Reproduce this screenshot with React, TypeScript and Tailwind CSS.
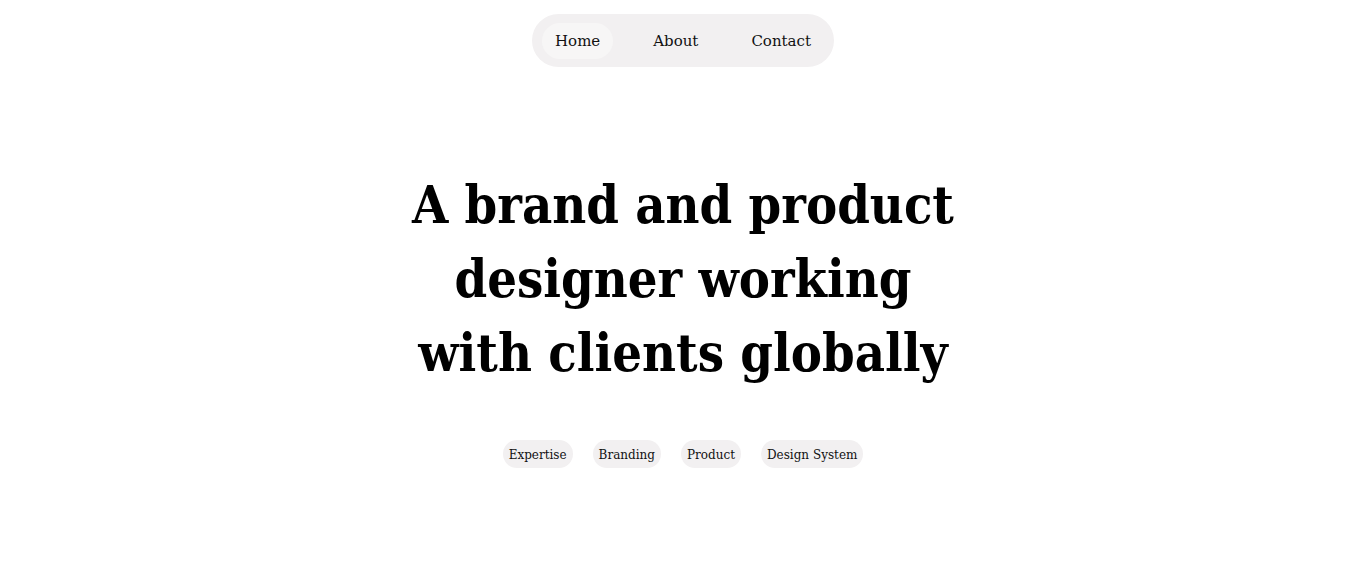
export default function App() {
  const font = { fontFamily: '"Roboto Slab", "DejaVu Serif", serif' };
  const hfont = { fontFamily: '"Roboto Slab", "DejaVu Serif Condensed", "DejaVu Serif", serif', fontStretch: "condensed" as const };
  return (
    <div className="min-h-[576px] w-full bg-white text-black" style={font}>
      <div className="flex justify-center pt-[14px]">
        <nav className="flex items-center gap-[27px] rounded-full bg-[#f2f0f1] px-[10px] h-[53px]">
          <a className="flex h-[36px] items-center rounded-full bg-[#f7f6f6] px-[13px] pt-[2px] text-[15px] text-[#111]">Home</a>
          <a className="flex h-[36px] items-center rounded-full px-[13px] pt-[2px] text-[15px] text-[#111]">About</a>
          <a className="flex h-[36px] items-center rounded-full px-[13px] pt-[2px] text-[15px] text-[#111]">Contact</a>
        </nav>
      </div>
      <h1 className="mx-auto mt-[101px] text-center text-[52px] font-bold leading-[74px] text-black" style={hfont}>
        A brand and product
        <br />
        designer working
        <br />
        with clients globally
      </h1>
      <div className="mt-[50px] flex justify-center gap-[20px]">
        {["Expertise", "Branding", "Product", "Design System"].map((t) => (
          <span key={t} className="flex h-[28px] items-center rounded-full bg-[#f2f0f1] px-[6px] pt-[1px] text-[12px] text-[#111]">
            {t}
          </span>
        ))}
      </div>
    </div>
  );
}
